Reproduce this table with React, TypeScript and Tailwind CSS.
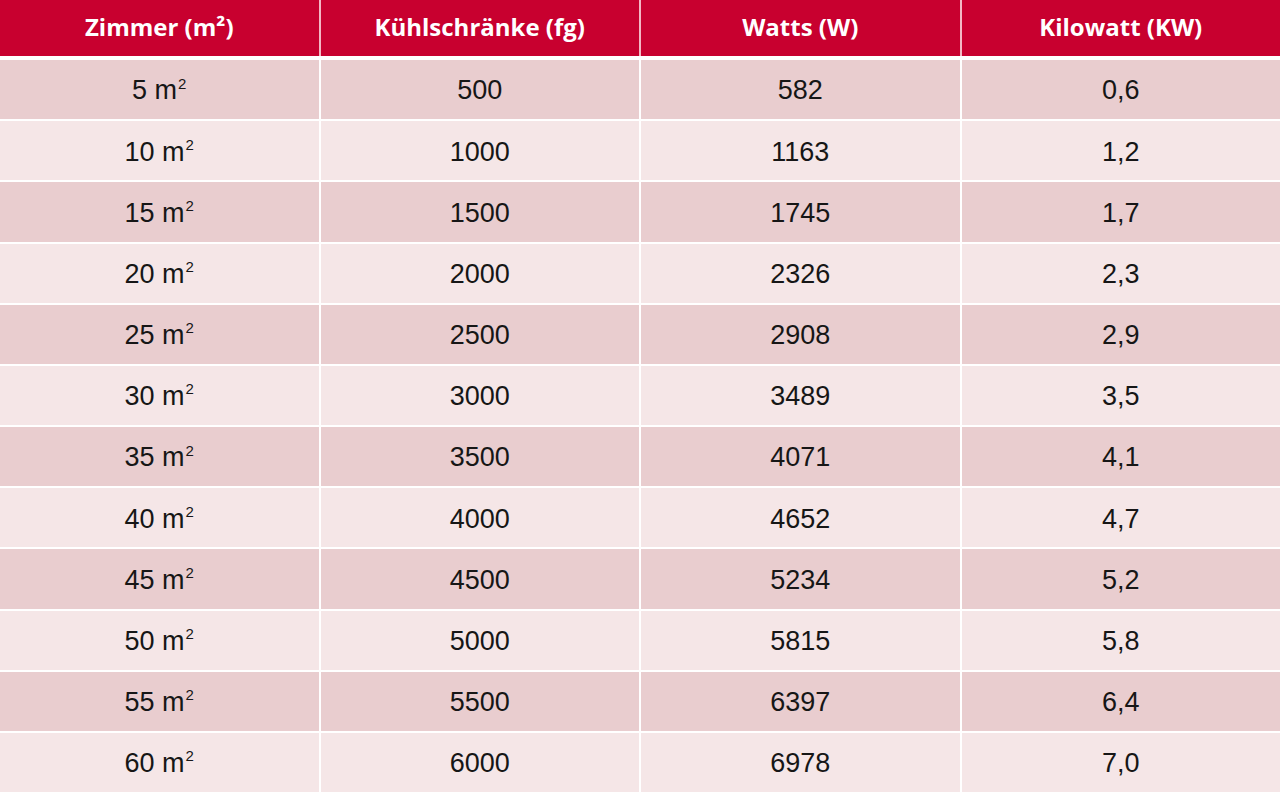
const rows: [string, string, string, string][] = [
  ["5", "500", "582", "0,6"],
  ["10", "1000", "1163", "1,2"],
  ["15", "1500", "1745", "1,7"],
  ["20", "2000", "2326", "2,3"],
  ["25", "2500", "2908", "2,9"],
  ["30", "3000", "3489", "3,5"],
  ["35", "3500", "4071", "4,1"],
  ["40", "4000", "4652", "4,7"],
  ["45", "4500", "5234", "5,2"],
  ["50", "5000", "5815", "5,8"],
  ["55", "5500", "6397", "6,4"],
  ["60", "6000", "6978", "7,0"],
];

const headers = ["Zimmer (m²)", "Kühlschränke (fg)", "Watts (W)", "Kilowatt (KW)"];

export default function App() {
  return (
    <div className="flex h-screen w-full flex-col bg-white">
      <div className="grid h-[56px] shrink-0 grid-cols-4 gap-x-[2px] bg-[#f3b8c4]">
        {headers.map((h) => (
          <div
            key={h}
            className="flex items-center justify-center bg-[#c8002f] pb-[2px] text-[24px] font-bold text-white [font-family:'Open_Sans',sans-serif]"
          >
            {h}
          </div>
        ))}
      </div>
      <div className="mt-[4px] flex flex-1 flex-col gap-y-[2px]">
        {rows.map((r, i) => {
          const bg = i % 2 === 0 ? "bg-[#e9cdcf]" : "bg-[#f5e6e7]";
          return (
            <div key={r[0]} className="grid flex-1 grid-cols-4 gap-x-[2px]">
              <div className={`flex items-center justify-center ${bg} pt-[2px] text-[27px] text-[#161616] [font-family:'Liberation_Sans',Arial,sans-serif]`}>
                {r[0]} m<sup className="relative -top-[7px] ml-[1px] text-[15px]">2</sup>
              </div>
              {r.slice(1).map((v, j) => (
                <div
                  key={j}
                  className={`flex items-center justify-center ${bg} pt-[2px] text-[27px] text-[#161616] [font-family:'Liberation_Sans',Arial,sans-serif]`}
                >
                  {v}
                </div>
              ))}
            </div>
          );
        })}
      </div>
    </div>
  );
}
